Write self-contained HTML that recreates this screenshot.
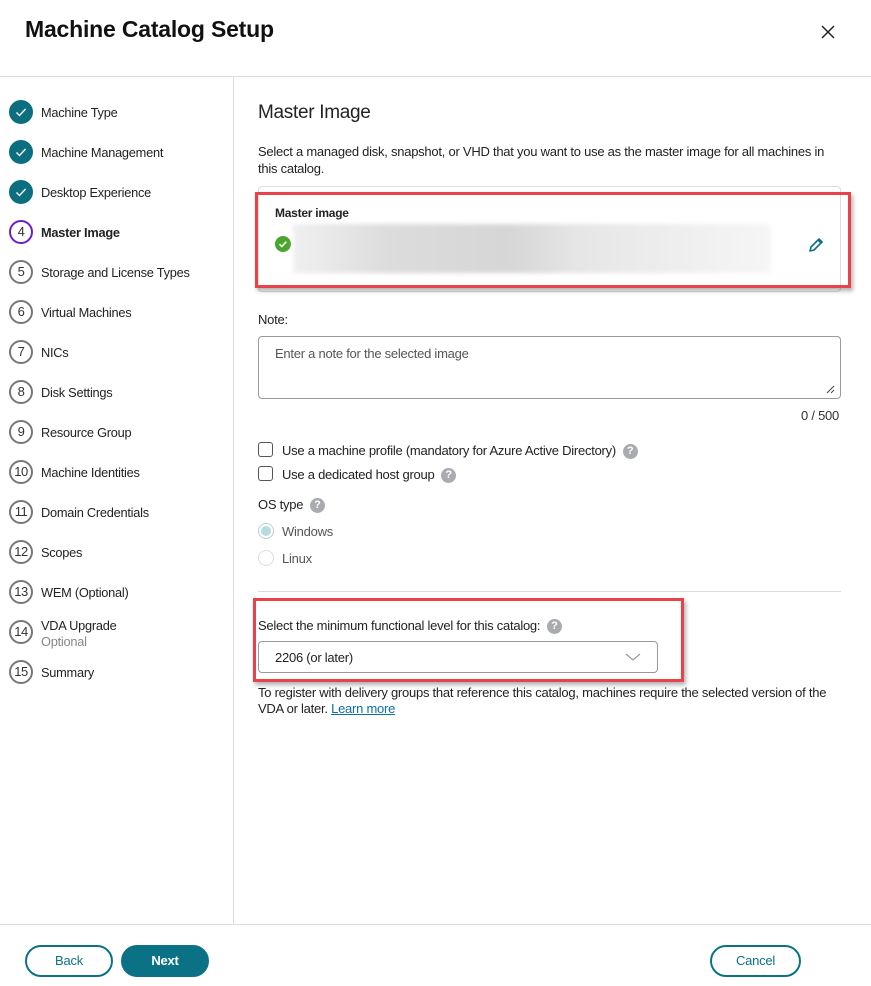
<!DOCTYPE html>
<html><head><meta charset="utf-8">
<style>
*{box-sizing:border-box;margin:0;padding:0}
body{width:871px;height:986px;position:relative;background:#fff;font-family:"Liberation Sans",sans-serif;color:#222;overflow:hidden;font-size:13px;letter-spacing:-0.25px}
.a{position:absolute;white-space:nowrap}
.hl{position:absolute;background:#ddd}
.step{position:absolute;left:9px;height:24px;width:220px}
.c{position:absolute;left:0;top:0;width:24px;height:24px;border-radius:50%;border:2px solid #777;font-size:13px;text-align:center;line-height:20px;color:#333;letter-spacing:-0.5px}
.c.done{background:#0b6f80;border-color:#0b6f80}
.c.cur{border-color:#6a1fc2}
.st{position:absolute;left:32px;top:5px;font-size:12.8px;color:#222}
.q{display:inline-block;width:15px;height:15px;border-radius:50%;background:#a9abb0;color:#fff;font-size:11px;font-weight:bold;text-align:center;line-height:15px;vertical-align:middle;letter-spacing:0}
.cb{position:absolute;width:15px;height:15px;border:1.3px solid #555;border-radius:3px;background:#fff}
.btn{position:absolute;top:945px;height:32px;border-radius:16px;border:2px solid #0b7285;color:#0b7285;font-size:13px;font-weight:bold;text-align:center;line-height:28px}
.red{position:absolute;border:3px solid #e8434a;box-shadow:2px 3px 4px rgba(0,0,0,.3)}
</style></head><body>
<div class="a" style="left:25px;top:16px;font-size:23px;font-weight:bold;color:#111;letter-spacing:-0.2px">Machine Catalog Setup</div>
<svg class="a" style="left:820px;top:24px" width="16" height="16" viewBox="0 0 16 16"><path d="M2 2L14 14M14 2L2 14" stroke="#222" stroke-width="1.5"/></svg>
<div class="hl" style="left:0;top:76px;width:871px;height:1px"></div>
<div class="hl" style="left:233px;top:77px;width:1px;height:847px"></div>
<div class="hl" style="left:0;top:924px;width:871px;height:1px"></div>

<div class="step" style="top:100px"><div class="c done"><svg width="20" height="20" viewBox="0 0 20 20"><path d="M5.5 10.5l3 3 6-6.5" stroke="#fff" stroke-width="1.4" fill="none"/></svg></div><div class="st">Machine Type</div></div>
<div class="step" style="top:140px"><div class="c done"><svg width="20" height="20" viewBox="0 0 20 20"><path d="M5.5 10.5l3 3 6-6.5" stroke="#fff" stroke-width="1.4" fill="none"/></svg></div><div class="st">Machine Management</div></div>
<div class="step" style="top:180px"><div class="c done"><svg width="20" height="20" viewBox="0 0 20 20"><path d="M5.5 10.5l3 3 6-6.5" stroke="#fff" stroke-width="1.4" fill="none"/></svg></div><div class="st">Desktop Experience</div></div>
<div class="step" style="top:220px"><div class="c cur">4</div><div class="st" style="font-weight:bold">Master Image</div></div>
<div class="step" style="top:260px"><div class="c">5</div><div class="st">Storage and License Types</div></div>
<div class="step" style="top:300px"><div class="c">6</div><div class="st">Virtual Machines</div></div>
<div class="step" style="top:340px"><div class="c">7</div><div class="st">NICs</div></div>
<div class="step" style="top:380px"><div class="c">8</div><div class="st">Disk Settings</div></div>
<div class="step" style="top:420px"><div class="c">9</div><div class="st">Resource Group</div></div>
<div class="step" style="top:460px"><div class="c">10</div><div class="st">Machine Identities</div></div>
<div class="step" style="top:500px"><div class="c">11</div><div class="st">Domain Credentials</div></div>
<div class="step" style="top:540px"><div class="c">12</div><div class="st">Scopes</div></div>
<div class="step" style="top:580px"><div class="c">13</div><div class="st">WEM (Optional)</div></div>
<div class="step" style="top:620px"><div class="c">14</div><div class="st" style="top:-2px">VDA Upgrade</div><div class="st" style="top:14px;color:#888">Optional</div></div>
<div class="step" style="top:660px"><div class="c">15</div><div class="st">Summary</div></div>

<div class="a" style="left:258px;top:102px;font-size:19px;color:#222;letter-spacing:-0.3px">Master Image</div>
<div class="a" style="left:258px;top:143px;line-height:17px">Select a managed disk, snapshot, or VHD that you want to use as the master image for all machines in<br>this catalog.</div>

<div class="a" style="left:258px;top:186px;width:583px;height:106px;border:1px solid #ddd;border-radius:4px"></div>
<div class="a" style="left:275px;top:206px;font-weight:bold;font-size:12px">Master image</div>
<div class="a" style="left:275px;top:236px;width:16px;height:16px;border-radius:50%;background:#4aa52e"><svg width="16" height="16" viewBox="0 0 16 16"><path d="M4.5 8.2l2.3 2.3 4.5-4.8" stroke="#fff" stroke-width="1.5" fill="none"/></svg></div>
<div class="a" style="left:293px;top:224px;width:478px;height:49px;background:linear-gradient(90deg,#f0f0f0,#dcdcdc 20%,#d6d6d6 45%,#e6e6e6 60%,#eeeeee 80%,#f6f6f6);filter:blur(2px)"></div>
<svg class="a" style="left:806px;top:235px" width="20" height="20" viewBox="0 0 20 20"><path d="M4 16l1-4 8-8 3 3-8 8z M12 5l3 3" stroke="#0b7285" stroke-width="1.6" fill="none" stroke-linejoin="round"/></svg>
<div class="red" style="left:255px;top:192px;width:596px;height:96px"></div>

<div class="a" style="left:258px;top:312px">Note:</div>
<div class="a" style="left:258px;top:336px;width:583px;height:63px;border:1px solid #999;border-radius:4px"></div>
<div class="a" style="left:275px;top:346px;color:#555">Enter a note for the selected image</div>
<svg class="a" style="left:825px;top:384px" width="10" height="10" viewBox="0 0 10 10"><path d="M2 9L9 2M6 9L9 6" stroke="#444" stroke-width="1"/></svg>
<div class="a" style="left:801px;top:408px;color:#333">0 / 500</div>

<div class="cb" style="left:258px;top:442px"></div>
<div class="a" style="left:282px;top:443px">Use a machine profile (mandatory for Azure Active Directory) &nbsp;<span class="q">?</span></div>
<div class="cb" style="left:258px;top:466px"></div>
<div class="a" style="left:282px;top:467px">Use a dedicated host group &nbsp;<span class="q">?</span></div>
<div class="a" style="left:258px;top:497px">OS type &nbsp;<span class="q">?</span></div>
<div class="a" style="left:258px;top:523px;width:16px;height:16px;border-radius:50%;border:1px solid #bcd;background:#fff"><div style="margin:2px;width:10px;height:10px;border-radius:50%;background:#b8dbe0"></div></div>
<div class="a" style="left:282px;top:524px;color:#555">Windows</div>
<div class="a" style="left:258px;top:550px;width:16px;height:16px;border-radius:50%;border:1px solid #ddd"></div>
<div class="a" style="left:282px;top:551px;color:#555">Linux</div>
<div class="hl" style="left:258px;top:591px;width:583px;height:1px"></div>

<div class="a" style="left:258px;top:618px">Select the minimum functional level for this catalog: &nbsp;<span class="q">?</span></div>
<div class="a" style="left:258px;top:641px;width:400px;height:32px;border:1px solid #999;border-radius:4px"></div>
<div class="a" style="left:275px;top:650px">2206 (or later)</div>
<svg class="a" style="left:625px;top:651px" width="16" height="12" viewBox="0 0 16 12"><path d="M1 3l7 6 7-6" stroke="#999" stroke-width="1.2" fill="none"/></svg>
<div class="red" style="left:253px;top:598px;width:431px;height:84px"></div>
<div class="a" style="left:258px;top:685px;line-height:16px">To register with delivery groups that reference this catalog, machines require the selected version of the<br>VDA or later. <span style="color:#0b6fa8;text-decoration:underline">Learn more</span></div>

<div class="btn" style="left:25px;width:88px;font-weight:normal">Back</div>
<div class="btn" style="left:121px;width:88px;background:#0b7285;color:#fff">Next</div>
<div class="btn" style="left:710px;width:91px;font-weight:normal">Cancel</div>
</body></html>
